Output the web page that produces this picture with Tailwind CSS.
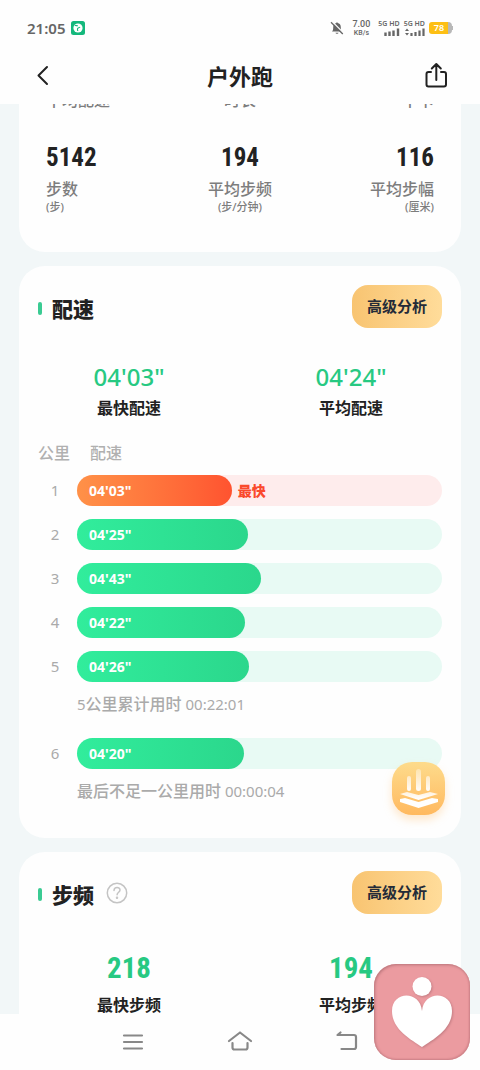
<!DOCTYPE html>
<html lang="zh-CN">
<head>
<meta charset="utf-8">
<meta name="viewport" content="width=device-width, initial-scale=1">
<title>户外跑</title>
<script src="https://cdn.jsdelivr.net/npm/@tailwindcss/browser@4"></script>
</head>
<body class="relative flex h-screen flex-col overflow-hidden bg-[#f2f7f8] font-['Noto_Sans','Noto_Sans_CJK_SC',sans-serif] text-[#222]">

<header class="shrink-0 bg-[#fefefe]">
  <div class="flex h-14 items-center justify-between px-[27px] text-[#666]">
    <div class="flex items-center gap-1.5">
      <time class="text-[15px] leading-5 font-semibold">21:05</time>
      <svg class="size-3.5" viewBox="0 0 14 14"><rect width="14" height="14" rx="2.5" fill="#14b87c"/><circle cx="7" cy="7" r="4.6" fill="#fff"/><path d="M3.800 4.600C5 4 5.600 5.200 7 4.700M6.800 10c-.2-1.200-.6-1.600-.2-2.500.5-.9 1.700-.5 2.400-1.500" fill="none" stroke="#14b87c" stroke-width="1.100"/></svg>
    </div>
    <div class="flex items-center gap-2">
      <svg class="size-3.5" viewBox="0 0 14 14"><path d="M2 10.500c1-.8 1.200-1.700 1.200-4.200C3.200 4 4.600 2.400 6.300 2.100 6.300 1 7.700 1 7.700 2.100 9.600 2.400 10.800 4 10.800 6.300c0 2.500.2 3.400 1.200 4.200z" fill="#666"/><path d="M5.500 11.800h3c-.3 1.300-2.700 1.300-3 0z" fill="#666"/><path d="M2.500 1 14 12.500" stroke="#fefefe" stroke-width="1.500"/><path d="M1 1.200 12.800 13" stroke="#666" stroke-width="1.300"/></svg>
      <div class="text-center font-['Roboto',sans-serif] font-medium"><p class="text-[9px] leading-[9px]">7.00</p><p class="text-[7px] leading-2">KB/s</p></div>
      <div class="flex gap-1 text-[7px] leading-2 font-semibold">
        <div class="flex flex-col items-end"><span>5G HD</span><svg class="h-2 w-4" viewBox="0 0 16 8"><path d="M1.500 4.500V8M5.500 3.500V8M9.500 2.500V8M14 .500V8" stroke="#666" stroke-width="2.400"/></svg></div>
        <div class="flex flex-col items-end"><span>5G HD</span><svg class="h-2 w-5" viewBox="0 0 20 8"><path d="M0 3l2-2.500L4 3zM0 5l2 2.500L4 5z" fill="#666"/><path d="M6.500 5V8M10.500 4V8M14.500 2.500V8M18.500 .500V8" stroke="#666" stroke-width="2.200"/></svg></div>
      </div>
      <div class="-ml-1 flex items-center"><span class="h-3 w-[19px] rounded-l-[3px] bg-[#fdbf14] pl-px text-center text-[9px] leading-3 font-semibold text-white">78</span><span class="h-3 w-1 rounded-r bg-[#b8b8b8]"></span><span class="h-1 w-px bg-[#b8b8b8]"></span></div>
    </div>
  </div>
  <div class="grid h-12 grid-cols-3 items-start px-8">
    <button aria-label="返回" class="justify-self-start"><svg class="h-10 w-5" viewBox="0 0 20 40" fill="none" stroke="#222" stroke-width="2" stroke-linecap="round" stroke-linejoin="round"><path d="M15 11 6.500 19.500 15 28"/></svg></button>
    <h1 class="text-center text-[22px] leading-10 font-bold">户外跑</h1>
    <button aria-label="分享" class="justify-self-end"><svg class="h-10 w-6" viewBox="0 0 24 40" fill="none" stroke="#222" stroke-width="2" stroke-linecap="round" stroke-linejoin="round"><path d="M7 16H4.500Q2.500 16 2.500 18v10.500q0 2 2 2h15.500q2 0 2-2V18q0-2-2-2H17M12.300 24V8.500M7.800 12.500l4.500-4.500 4.500 4.500"/></svg></button>
  </div>
</header>

<main class="min-h-0 flex-1 overflow-hidden px-[19px]">
  <div class="-mt-5 flex flex-col gap-3.5">
    <section class="rounded-b-[26px] bg-[#fefefe] px-[27px] pb-[39px] font-medium text-[#7d7d7d]">
      <div class="grid grid-cols-3 pt-1 leading-6"><p>平均配速</p><p class="text-center">时长</p><p class="text-right">千卡</p></div>
      <dl class="mt-[26px] grid grid-cols-3">
        <div class="flex flex-col"><dt class="order-2 leading-6">步数<span class="block text-[11px] leading-3">(步)</span></dt><dd class="font-['Roboto_Condensed','Roboto',sans-serif] text-[25px] leading-[39px] font-bold text-[#222]">5142</dd></div>
        <div class="flex flex-col text-center"><dt class="order-2 leading-6">平均步频<span class="block text-[11px] leading-3">(步/分钟)</span></dt><dd class="font-['Roboto_Condensed','Roboto',sans-serif] text-[25px] leading-[39px] font-bold text-[#222]">194</dd></div>
        <div class="flex flex-col text-right"><dt class="order-2 leading-6">平均步幅<span class="block text-[11px] leading-3">(厘米)</span></dt><dd class="font-['Roboto_Condensed','Roboto',sans-serif] text-[25px] leading-[39px] font-bold text-[#222]">116</dd></div>
      </dl>
    </section>

    <section class="relative rounded-[26px] bg-[#fefefe] px-[19px] pt-[19px] pb-[33px]">
      <div class="flex items-center justify-between">
        <h2 class="flex items-center gap-2.5 pt-1 text-[21px] leading-8 font-black before:h-[13px] before:w-1 before:rounded-full before:bg-[#3acb93]">配速</h2>
        <button class="h-[43px] rounded-2xl bg-linear-to-r from-[#f8c471] to-[#ffdc9a] px-[15px] text-[15px] font-bold text-[#242b38]">高级分析</button>
      </div>
      <dl class="mt-[33px] grid grid-cols-2 text-center">
        <div class="flex flex-col pr-5"><dt class="order-2 leading-[30px] font-bold">最快配速</dt><dd class="text-2xl font-medium text-[#27c982]">04'03"</dd></div>
        <div class="flex flex-col pl-5"><dt class="order-2 leading-[30px] font-bold">平均配速</dt><dd class="text-2xl font-medium text-[#27c982]">04'24"</dd></div>
      </dl>
      <div class="mt-[18px] flex gap-5 leading-6 font-medium text-[#b0b0b0]"><span>公里</span><span>配速</span></div>
      <ol class="mt-2.5 flex flex-col gap-[13px] text-[15px] text-[#aaa]">
        <li class="grid grid-cols-[34px_1fr] items-center gap-[5px]"><span class="text-center">1</span><div class="flex h-[31px] items-center gap-1.5 rounded-full bg-[#feecec]"><span class="h-full rounded-full bg-linear-to-r from-[#ff9148] to-[#ff5330] pl-3 text-sm leading-[31px] font-bold text-white" style="width:42.4%">04'03"</span><b class="text-sm font-extrabold text-[#fa4a2d]">最快</b></div></li>
        <li class="grid grid-cols-[34px_1fr] items-center gap-[5px]"><span class="text-center">2</span><div class="h-[31px] rounded-full bg-[#e8faf4]"><span class="block h-full rounded-full bg-linear-to-r from-[#31ed9c] to-[#2bd78c] pl-3 text-sm leading-[31px] font-bold text-white" style="width:46.8%">04'25"</span></div></li>
        <li class="grid grid-cols-[34px_1fr] items-center gap-[5px]"><span class="text-center">3</span><div class="h-[31px] rounded-full bg-[#e8faf4]"><span class="block h-full rounded-full bg-linear-to-r from-[#31ed9c] to-[#2bd78c] pl-3 text-sm leading-[31px] font-bold text-white" style="width:50.3%">04'43"</span></div></li>
        <li class="grid grid-cols-[34px_1fr] items-center gap-[5px]"><span class="text-center">4</span><div class="h-[31px] rounded-full bg-[#e8faf4]"><span class="block h-full rounded-full bg-linear-to-r from-[#31ed9c] to-[#2bd78c] pl-3 text-sm leading-[31px] font-bold text-white" style="width:46.1%">04'22"</span></div></li>
        <li class="grid grid-cols-[34px_1fr] items-center gap-[5px]"><span class="text-center">5</span><div class="h-[31px] rounded-full bg-[#e8faf4]"><span class="block h-full rounded-full bg-linear-to-r from-[#31ed9c] to-[#2bd78c] pl-3 text-sm leading-[31px] font-bold text-white" style="width:47%">04'26"</span></div></li>
      </ol>
      <p class="mt-2 pl-[39px] text-[15px] leading-7 text-[#aaa]">5<span class="text-base font-medium">公里累计用时</span> 00:22:01</p>
      <div class="mt-5 grid grid-cols-[34px_1fr] items-center gap-[5px] text-[15px] text-[#aaa]"><span class="text-center">6</span><div class="h-[31px] rounded-full bg-[#e8faf4]"><span class="block h-full rounded-full bg-linear-to-r from-[#31ed9c] to-[#2bd78c] pl-3 text-sm leading-[31px] font-bold text-white" style="width:45.7%">04'20"</span></div></div>
      <p class="mt-2 pl-[39px] text-[15px] leading-7 text-[#aaa]"><span class="text-base font-medium">最后不足一公里用时</span> 00:00:04</p>
      <button aria-label="数据分析" class="absolute right-4 bottom-[23px] size-[53px] rounded-[20px] bg-linear-to-b from-[#fddb8b] to-[#ffb95f] shadow-[0_5px_9px_#ffc98566]">
        <svg class="size-full" viewBox="0 0 53 53"><defs><linearGradient id="beam" x1="0" y1="7" x2="0" y2="30" gradientUnits="userSpaceOnUse"><stop stop-color="#fff" stop-opacity=".35"/><stop offset="1" stop-color="#fff"/></linearGradient><linearGradient id="layer" x1="0" y1="28" x2="0" y2="46" gradientUnits="userSpaceOnUse"><stop stop-color="#fff" stop-opacity=".7"/><stop offset=".5" stop-color="#fff"/></linearGradient></defs><g fill="url(#beam)"><rect x="15" y="14" width="4" height="15" rx="2"/><rect x="24" y="7" width="5" height="22" rx="2.500"/><rect x="34" y="14" width="4" height="15" rx="2"/></g><path d="M8 32l7-2 11.500 3L38 30l8 2-19.500 6zM8 40v-3l5-1 13.500 4L40 36l6 1v3l-19.500 6z" fill="url(#layer)"/></svg>
      </button>
    </section>

    <section class="rounded-[26px] bg-[#fefefe] px-[19px] pt-[19px] pb-9">
      <div class="flex items-center justify-between">
        <div class="flex items-center gap-3">
          <h2 class="flex items-center gap-2.5 pt-1 text-[21px] leading-8 font-black before:h-[13px] before:w-1 before:rounded-full before:bg-[#3acb93]">步频</h2>
          <button aria-label="步频说明"><svg class="size-[22px]" viewBox="0 0 22 22" fill="none" stroke="#c4c4c4" stroke-width="1.500" stroke-linecap="round"><circle cx="11" cy="11" r="9.700"/><path d="M8 8.500c.2-3.900 6-3.800 6-.4 0 2.200-2.900 2.200-2.900 4.700"/><circle cx="11" cy="15.800" r=".5"/></svg></button>
        </div>
        <button class="h-[43px] rounded-2xl bg-linear-to-r from-[#f8c471] to-[#ffdc9a] px-[15px] text-[15px] font-bold text-[#242b38]">高级分析</button>
      </div>
      <dl class="mt-8 grid grid-cols-2 text-center">
        <div class="flex flex-col pr-5"><dt class="order-2 leading-[30px] font-bold">最快步频</dt><dd class="font-['Roboto_Condensed','Roboto',sans-serif] text-[29px] leading-11 font-bold text-[#27c982]">218</dd></div>
        <div class="flex flex-col pl-5"><dt class="order-2 leading-[30px] font-bold">平均步频</dt><dd class="font-['Roboto_Condensed','Roboto',sans-serif] text-[29px] leading-11 font-bold text-[#27c982]">194</dd></div>
      </dl>
    </section>
  </div>
</main>

<nav class="flex h-14 shrink-0 items-center justify-center gap-20 bg-[#fefefe]">
  <button aria-label="最近任务"><svg class="h-7 w-[26px]" viewBox="0 0 26 28" fill="none" stroke="#888" stroke-width="2.200" stroke-linecap="round"><path d="M4 7.500h18M4 14h18M4 20.500h18"/></svg></button>
  <button aria-label="主屏幕"><svg class="h-7 w-7" viewBox="0 0 28 28" fill="none" stroke="#888" stroke-width="2.200" stroke-linecap="round" stroke-linejoin="round"><path d="M3 13 14 4.500 25 13M6.500 15v4.500q0 2 2 2h11q2 0 2-2V15"/></svg></button>
  <button aria-label="后退"><svg class="h-7 w-[26px]" viewBox="0 0 26 28" fill="none" stroke="#888" stroke-width="2.200" stroke-linecap="round" stroke-linejoin="round"><path d="M6.500 4.500 3.500 7H20q2 0 2 2v10q0 2-2 2H7.500"/></svg></button>
</nav>

<button aria-label="悬浮应用" class="absolute right-2.5 bottom-2.5 size-24 overflow-hidden rounded-[22px] bg-[#eb9ba0] shadow-[inset_1px_1px_3px_#b8747a,inset_-1px_-1px_2px_#d08389]">
  <svg class="size-full drop-shadow-[1px_1px_1px_#c47d83]" viewBox="0 0 96 96" fill="#fff"><circle cx="48" cy="22.500" r="9.500"/><path d="M48 47C46 26 18 27 18 47c0 19 20 29 30 36 10-7 30-17 30-36 0-20-28-21-30 0z"/></svg>
</button>
</body>
</html>
